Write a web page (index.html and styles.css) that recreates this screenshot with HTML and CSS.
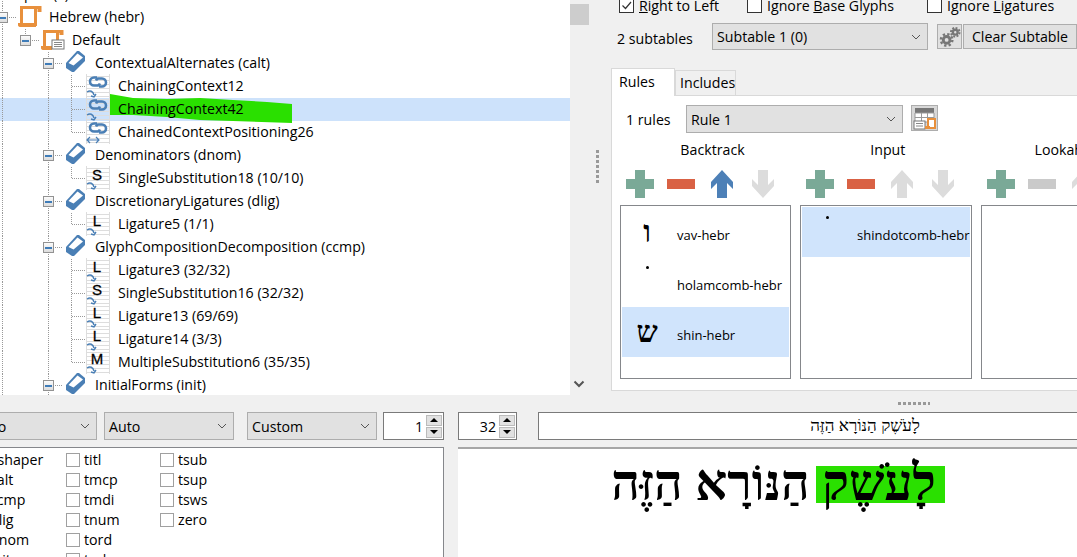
FILE: index.html
```html
<!DOCTYPE html>
<html lang="en">
<head>
  <meta charset="UTF-8">
  <title>Font feature editor</title>
  <link rel="stylesheet" href="styles.css">
</head>
<body>
  <svg class="defs" width="0" height="0">
    <symbol id="feature" viewBox="0 0 20 24">
      <path d="M0 13 11 1h2l6 5v5L8 22H6l-6-4z" fill="#4a7fb5"/>
      <path d="M2.500 13 11.500 3.500 17 7.500 7.500 15.500z" fill="#fff"/>
    </symbol>
    <symbol id="chev" viewBox="0 0 12 8">
      <path d="M2 2l4 4 4-4" fill="none" stroke="#555" stroke-width="1"/>
    </symbol>
    <symbol id="table" viewBox="0 0 24 24">
      <g stroke="#ddd" fill="none">
        <path d="M0 2.500h24M0 6.500h24M0 10.500h24M0 14.500h24M0 18.500h24M0 22.500h24M.5 0v24M23.500 0v24"/>
      </g>
    </symbol>
    <symbol id="link" viewBox="0 0 24 16">
      <g fill="none" stroke="#4a7fb5" stroke-width="2.600">
        <path d="M11 3.500H8a4 4 0 0 0 0 8h4a4 4 0 0 0 2-2"/>
        <path d="M13 12.500h3a4 4 0 0 0 0-8h-4a4 4 0 0 0-2 2"/>
      </g>
    </symbol>
    <symbol id="sub" viewBox="0 0 12 8">
      <path d="M1 2c3-2 6-1 7 3M5 6l3 1 2-3" fill="none" stroke="#4a7fb5" stroke-width="1.400"/>
    </symbol>
    <symbol id="both" viewBox="0 0 14 8">
      <path d="M1 4h12M4 1 1 4l3 3M10 1l3 3-3 3" fill="none" stroke="#4a7fb5" stroke-width="1.200"/>
    </symbol>
    <symbol id="plus" viewBox="0 0 28 28"><path d="M9 0h10v9h9v10h-9v9H9v-9H0V9h9z"/></symbol>
    <symbol id="minus" viewBox="0 0 28 28"><path d="M0 9h28v10H0z"/></symbol>
    <symbol id="up" viewBox="0 0 22 28"><path d="M11 0l11 12v7l-6-6v15h-10V13l-6 6v-7z"/></symbol>
    <symbol id="down" viewBox="0 0 22 28"><path d="M11 28 0 16V9l6 6V0h10v15l6-6v7z"/></symbol>
  </svg>

  <div class="top">
    <div class="tree-pane">
      <div class="row"><i class="cell v"></i><span class="ghost">pen (x)</span></div>

      <div class="row">
        <i class="cell v h"><b class="exp"></b></i>
        <span class="ico">
          <svg class="script" width="26" height="23" viewBox="0 0 26 23"><path d="M6.500 18V1.500h16M22.500 1.500H25v3h-2.500M20.500 3v17" fill="none" stroke="#e8903c" stroke-width="3"/><path d="M3 17h18v4H6q-3 0-3-2z" fill="#e8903c"/></svg>
        </span>
        <span class="label">Hebrew (hebr)</span>
      </div>
      <div class="row">
        <i class="cell v"></i><i class="cell up h"><b class="exp gray"></b></i>
        <span class="ico">
          <svg class="script" width="26" height="25" viewBox="0 0 26 25"><path d="M6.500 18V2.500h15M21.500 2.500H24v2h-2.500M19.500 4v8" fill="none" stroke="#e8903c" stroke-width="3"/><path d="M3 17h11v4H6q-3 0-3-2z" fill="#e8903c"/><rect x="14" y="11" width="12" height="9" fill="#fff" stroke="#777"/><path d="M16 13.500h8M16 15.500h8M16 17.500h8" stroke="#888"/></svg>
        </span>
        <span class="label">Default</span>
      </div>

      <div class="row">
        <i class="cell v"></i><i class="cell"></i><i class="cell v h"><b class="exp"></b></i>
        <span class="ico"><svg class="fea" width="20" height="24"><use href="#feature"/></svg></span>
        <span class="label">ContextualAlternates (calt)</span>
      </div>
      <div class="row">
        <i class="cell v"></i><i class="cell"></i><i class="cell v"></i><i class="cell v h"></i>
        <span class="ico lk"><svg width="24" height="24"><use href="#table"/><use href="#link" width="24" height="16" y="0"/><use href="#sub" width="12" height="8" y="16"/></svg></span>
        <span class="label">ChainingContext12</span>
      </div>
      <div class="row sel">
        <i class="cell v"></i><i class="cell"></i><i class="cell v"></i><i class="cell v h"></i>
        <span class="ico lk"><svg width="24" height="24"><use href="#table"/><use href="#link" width="24" height="16" y="0"/><use href="#sub" width="12" height="8" y="16"/></svg></span>
        <span class="label marked">
          <svg class="paint" width="184" height="30" viewBox="0 0 184 30"><path d="M0 0 23 4 57 5 90 4 123 6 157 8 182 10V29L123 27 90 26 57 23 23 21 0 21z" fill="#2ae000"/></svg>
          <span>ChainingContext42</span>
        </span>
      </div>
      <div class="row">
        <i class="cell v"></i><i class="cell"></i><i class="cell v"></i><i class="cell up h"></i>
        <span class="ico lk"><svg width="24" height="24"><use href="#table"/><use href="#link" width="24" height="16" y="0"/><use href="#both" width="14" height="8" y="16"/></svg></span>
        <span class="label">ChainedContextPositioning26</span>
      </div>

      <div class="row">
        <i class="cell v"></i><i class="cell"></i><i class="cell v h"><b class="exp"></b></i>
        <span class="ico"><svg class="fea" width="20" height="24"><use href="#feature"/></svg></span>
        <span class="label">Denominators (dnom)</span>
      </div>
      <div class="row">
        <i class="cell v"></i><i class="cell"></i><i class="cell v"></i><i class="cell up h"></i>
        <span class="ico lk"><svg width="24" height="24"><use href="#table"/><text x="11" y="14" class="letter">S</text><use href="#sub" width="12" height="8" y="16"/></svg></span>
        <span class="label">SingleSubstitution18 (10/10)</span>
      </div>

      <div class="row">
        <i class="cell v"></i><i class="cell"></i><i class="cell v h"><b class="exp"></b></i>
        <span class="ico"><svg class="fea" width="20" height="24"><use href="#feature"/></svg></span>
        <span class="label">DiscretionaryLigatures (dlig)</span>
      </div>
      <div class="row">
        <i class="cell v"></i><i class="cell"></i><i class="cell v"></i><i class="cell up h"></i>
        <span class="ico lk"><svg width="24" height="24"><use href="#table"/><text x="11" y="14" class="letter">L</text><use href="#sub" width="12" height="8" y="16"/></svg></span>
        <span class="label">Ligature5 (1/1)</span>
      </div>

      <div class="row">
        <i class="cell v"></i><i class="cell"></i><i class="cell v h"><b class="exp"></b></i>
        <span class="ico"><svg class="fea" width="20" height="24"><use href="#feature"/></svg></span>
        <span class="label">GlyphCompositionDecomposition (ccmp)</span>
      </div>
      <div class="row">
        <i class="cell v"></i><i class="cell"></i><i class="cell v"></i><i class="cell v h"></i>
        <span class="ico lk"><svg width="24" height="24"><use href="#table"/><text x="11" y="14" class="letter">L</text><use href="#sub" width="12" height="8" y="16"/></svg></span>
        <span class="label">Ligature3 (32/32)</span>
      </div>
      <div class="row">
        <i class="cell v"></i><i class="cell"></i><i class="cell v"></i><i class="cell v h"></i>
        <span class="ico lk"><svg width="24" height="24"><use href="#table"/><text x="11" y="14" class="letter">S</text><use href="#sub" width="12" height="8" y="16"/></svg></span>
        <span class="label">SingleSubstitution16 (32/32)</span>
      </div>
      <div class="row">
        <i class="cell v"></i><i class="cell"></i><i class="cell v"></i><i class="cell v h"></i>
        <span class="ico lk"><svg width="24" height="24"><use href="#table"/><text x="11" y="14" class="letter">L</text><use href="#sub" width="12" height="8" y="16"/></svg></span>
        <span class="label">Ligature13 (69/69)</span>
      </div>
      <div class="row">
        <i class="cell v"></i><i class="cell"></i><i class="cell v"></i><i class="cell v h"></i>
        <span class="ico lk"><svg width="24" height="24"><use href="#table"/><text x="11" y="14" class="letter">L</text><use href="#sub" width="12" height="8" y="16"/></svg></span>
        <span class="label">Ligature14 (3/3)</span>
      </div>
      <div class="row">
        <i class="cell v"></i><i class="cell"></i><i class="cell v"></i><i class="cell up h"></i>
        <span class="ico lk"><svg width="24" height="24"><use href="#table"/><text x="11" y="14" class="letter">M</text><use href="#sub" width="12" height="8" y="16"/></svg></span>
        <span class="label">MultipleSubstitution6 (35/35)</span>
      </div>

      <div class="row">
        <i class="cell v"></i><i class="cell"></i><i class="cell v h"><b class="exp"></b></i>
        <span class="ico"><svg class="fea" width="20" height="24"><use href="#feature"/></svg></span>
        <span class="label">InitialForms (init)</span>
      </div>
    </div>

    <div class="scrollbar">
      <div class="thumb"></div>
      <svg class="scroll-down" width="12" height="8" viewBox="0 0 12 8"><path d="M1.500 1.500 6 6l4.500-4.500" fill="none" stroke="#555" stroke-width="2"/></svg>
    </div>
    <div class="splitter"><div class="grip"></div></div>

    <div class="lookup">
      <div class="flags">
        <span class="flag flag-rtl"><i class="box on"><svg width="13" height="13" viewBox="0 0 13 13"><path d="M2.500 6.500 5.500 9.500 11 3" fill="none" stroke="#333" stroke-width="1.200"/></svg></i><u>R</u>ight to Left</span>
        <span class="flag flag-base"><i class="box on"></i>Ignore <u>B</u>ase Glyphs</span>
        <span class="flag"><i class="box on"></i>Ignore <u>L</u>igatures</span>
      </div>
      <div class="subtables">
        <span class="count">2 subtables</span>
        <div class="combo combo-sub">Subtable 1 (0)<svg width="12" height="8"><use href="#chev"/></svg></div>
        <div class="btn gear">
          <svg width="24" height="24" viewBox="0 0 24 24"><g fill="none" stroke="#777"><circle cx="9" cy="15" r="3.500" stroke-width="3"/><circle cx="9" cy="15" r="6" stroke-width="2.500" stroke-dasharray="2.400 2.300"/><circle cx="18" cy="7" r="2.500" stroke-width="2.500"/><circle cx="18" cy="7" r="4.500" stroke-width="2" stroke-dasharray="2 1.500"/></g></svg>
        </div>
        <div class="btn clear">Clear Subtable</div>
      </div>

      <div class="tabs">
        <div class="tab active">Rules</div>
        <div class="tab">Includes</div>
      </div>
      <div class="pane">
        <div class="rule-row">
          <span class="rule-count">1 rules</span>
          <div class="combo combo-rule">Rule 1<svg width="12" height="8"><use href="#chev"/></svg></div>
          <div class="btn table-btn">
            <svg width="25" height="25" viewBox="0 0 25 25"><path d="M3 2h19v5H3z" fill="#777"/><path d="M3 7h19v9H3zM3 11.500h19M9.500 7v9M15.500 7v9" fill="#fff" stroke="#999"/><rect x="2" y="15" width="11" height="8" fill="#fff" stroke="#777"/><path d="M4 17.500h7M4 20h7" stroke="#888"/><path d="M16 13h7v9h-8v-1h1z" fill="#fff" stroke="#e8903c" stroke-width="2"/><path d="M13 20h5v3h-5z" fill="#e8903c"/></svg>
          </div>
        </div>
        <div class="sets">
          <div class="set">
            <div class="set-title title-back">Backtrack</div>
            <div class="tools">
              <svg class="green" width="28" height="28"><use href="#plus"/></svg>
              <svg class="red" width="28" height="28"><use href="#minus"/></svg>
              <svg class="blue" width="22" height="28"><use href="#up"/></svg>
              <svg class="off" width="22" height="28"><use href="#down"/></svg>
            </div>
            <div class="list">
              <div class="item"><span class="glyph" lang="he">ו</span><span class="name">vav-hebr</span></div>
              <div class="item"><span class="glyph dot"></span><span class="name">holamcomb-hebr</span></div>
              <div class="item sel"><span class="glyph" lang="he">ש</span><span class="name">shin-hebr</span></div>
            </div>
          </div>
          <div class="set">
            <div class="set-title title-input">Input</div>
            <div class="tools">
              <svg class="green" width="28" height="28"><use href="#plus"/></svg>
              <svg class="red" width="28" height="28"><use href="#minus"/></svg>
              <svg class="off" width="22" height="28"><use href="#up"/></svg>
              <svg class="off" width="22" height="28"><use href="#down"/></svg>
            </div>
            <div class="list">
              <div class="item sel"><span class="glyph dot"></span><span class="name">shindotcomb-hebr</span></div>
            </div>
          </div>
          <div class="set">
            <div class="set-title title-ahead">Lookahead</div>
            <div class="tools">
              <svg class="green" width="28" height="28"><use href="#plus"/></svg>
              <svg class="gray" width="28" height="28"><use href="#minus"/></svg>
              <svg class="off" width="22" height="28"><use href="#up"/></svg>
              <svg class="off" width="22" height="28"><use href="#down"/></svg>
            </div>
            <div class="list"></div>
          </div>
        </div>
      </div>
    </div>
  </div>

  <div class="hsplit"><div class="hgrip"></div></div>

  <div class="bottom">
    <div class="bottom-left">
      <div class="controls">
        <div class="combo combo-a">Auto<svg width="12" height="8"><use href="#chev"/></svg></div>
        <div class="combo combo-b">Auto<svg width="12" height="8"><use href="#chev"/></svg></div>
        <div class="combo combo-c">Custom<svg width="12" height="8"><use href="#chev"/></svg></div>
        <div class="spin spin-a">1<span class="arrows"><b class="arr-up"></b><b class="arr-down"></b></span></div>
      </div>
      <div class="features">
        <div class="feature-grid">
          <span class="feat"><i class="box"></i>xshaper</span>
          <span class="feat"><i class="box"></i>calt</span>
          <span class="feat"><i class="box"></i>ccmp</span>
          <span class="feat"><i class="box"></i>dlig</span>
          <span class="feat"><i class="box"></i>dnom</span>
          <span class="feat"><i class="box"></i>init</span>
          <span class="feat"><i class="box"></i>titl</span>
          <span class="feat"><i class="box"></i>tmcp</span>
          <span class="feat"><i class="box"></i>tmdi</span>
          <span class="feat"><i class="box"></i>tnum</span>
          <span class="feat"><i class="box"></i>tord</span>
          <span class="feat"><i class="box"></i>trak</span>
          <span class="feat"><i class="box"></i>tsub</span>
          <span class="feat"><i class="box"></i>tsup</span>
          <span class="feat"><i class="box"></i>tsws</span>
          <span class="feat"><i class="box"></i>zero</span>
        </div>
      </div>
    </div>
    <div class="bottom-right">
      <div class="controls">
        <div class="spin spin-b">32<span class="arrows"><b class="arr-up"></b><b class="arr-down"></b></span></div>
        <div class="sample-input" dir="rtl" lang="he">לָעֹשֶׁק הַנּוֹרָא הַזֶּה</div>
      </div>
      <div class="preview" dir="rtl" lang="he"><span class="hit">לָעֹשֶׁק</span> הַנּוֹרָא הַזֶּה</div>
    </div>
  </div>
</body>
</html>
```

FILE: styles.css
```css
* {
  box-sizing: border-box;
}

body {
  margin: 0;
  width: 1077px;
  height: 557px;
  overflow: hidden;
  background: #f0f0f0;
  color: #000;
  font-family: "Open Sans", "Noto Sans", sans-serif;
  font-size: 14.2px;
}

.defs {
  display: block;
  height: 0;
}

/* top half */
.top {
  display: flex;
  height: 397px;
}

.tree-pane {
  width: 570px;
  height: 395px;
  flex-shrink: 0;
  background: #fff;
  overflow: hidden;
}

.row {
  display: flex;
  height: 23px;
  line-height: 22px;
  margin-left: -9px;
  white-space: nowrap;
}

.row:first-child {
  margin-top: -17px;
}

.row.sel {
  background: #cde2fb;
}

.ghost {
  margin-left: 10px;
}

.cell {
  position: relative;
  display: flex;
  align-items: center;
  justify-content: center;
  flex: 0 0 23px;
  height: 23px;
}

/* dotted tree guides */
.cell.v::before,
.cell.up::before {
  content: "";
  position: absolute;
  left: 11px;
  top: 0;
  width: 1px;
  height: 100%;
  background: repeating-linear-gradient(#999 0 1px, transparent 1px 2px);
}

.cell.up::before {
  height: 12px;
}

.cell.h::after {
  content: "";
  position: absolute;
  left: 12px;
  top: 11px;
  width: 14px;
  height: 1px;
  background: repeating-linear-gradient(90deg, #999 0 1px, transparent 1px 2px);
}

.exp {
  position: relative;
  z-index: 1;
  width: 11px;
  height: 11px;
  border: 1px solid #929292;
  background: linear-gradient(#fbfbfb, #dcdcdc);
  display: flex;
  align-items: center;
  justify-content: center;
}

.exp::before {
  content: "";
  width: 7px;
  height: 2px;
  background: #3f7cb8;
}

.ico {
  position: relative;
  z-index: 1;
  flex: 0 0 35px;
  height: 23px;
  padding-left: 3px;
}

.ico svg {
  display: block;
  overflow: visible;
}

.ico .script {
  margin-left: -2px;
}

.ico .fea {
  margin: -2px 0 0 3px;
}

.lk svg {
  margin-top: -1px;
}

.letter {
  font-family: "Liberation Sans", sans-serif;
  font-size: 15px;
  stroke: #000;
  stroke-width: 0.3px;
  text-anchor: middle;
}

.label {
  position: relative;
}

.marked span {
  position: relative;
}

.paint {
  position: absolute;
  left: -8px;
  top: -4px;
}

/* scrollbar and splitter */
.scrollbar {
  position: relative;
  width: 19px;
  flex-shrink: 0;
}

.thumb {
  width: 19px;
  height: 21px;
  margin-top: 4px;
  background: #cdcdcd;
}

.scroll-down {
  position: absolute;
  left: 3px;
  top: 380px;
}

.splitter {
  width: 22px;
  flex-shrink: 0;
  padding: 150px 0 0 7px;
}

.grip {
  width: 3px;
  height: 33px;
  background: repeating-linear-gradient(#999 0 3px, transparent 3px 5px);
}

/* lookup editor */
.lookup {
  flex-shrink: 0;
  width: 600px;
  display: flex;
  flex-direction: column;
}

.flags {
  display: flex;
  height: 23px;
  margin-top: -6px;
  padding: 0 0 0 8px;
  line-height: 23px;
}

.flag {
  display: flex;
  align-items: center;
  white-space: pre;
}

.flag-rtl {
  width: 128px;
}

.flag-base {
  width: 180px;
}

.box {
  display: block;
  flex-shrink: 0;
  width: 15px;
  height: 15px;
  margin-right: 5px;
  background: #fff;
  border: 1px solid #333;
}

.box svg {
  display: block;
}

.subtables {
  display: flex;
  align-items: flex-start;
  margin-top: 6px;
  height: 44px;
  padding-left: 6px;
}

.count {
  width: 95px;
  line-height: 32px;
}

.combo {
  display: flex;
  align-items: center;
  justify-content: space-between;
  height: 28px;
  padding: 0 5px 0 4px;
  background: #e1e1e1;
  border: 1px solid #adadad;
  white-space: nowrap;
  flex-shrink: 0;
}

.combo-sub {
  width: 216px;
  height: 27px;
}

.btn {
  display: flex;
  align-items: center;
  justify-content: center;
  height: 25px;
  background: #e1e1e1;
  border: 1px solid #adadad;
  flex-shrink: 0;
}

.gear {
  width: 25px;
  margin: 1px 1px 0 9px;
}

.clear {
  width: 114px;
  margin-top: 1px;
}

.tabs {
  display: flex;
  align-items: flex-end;
  height: 28px;
}

.tab {
  height: 25px;
  line-height: 24px;
  padding: 0 4px;
  width: 61px;
  border: 1px solid #d9d9d9;
  border-bottom: 0;
  white-space: nowrap;
}

.tab.active {
  width: 64px;
  height: 28px;
  line-height: 26px;
  padding-left: 7px;
  background: #fff;
  position: relative;
  z-index: 1;
  margin-bottom: -1px;
}

.pane {
  height: 296px;
  background: #fff;
  border: 1px solid #d9d9d9;
  padding: 9px 0 0 8px;
}

.rule-row {
  display: flex;
  height: 28px;
  padding-left: 6px;
}

.rule-count {
  width: 60px;
  line-height: 30px;
}

.combo-rule {
  width: 217px;
}

.table-btn {
  width: 27px;
  height: 26px;
  margin-left: 8px;
  background: #d8d8d8;
}

.sets {
  display: flex;
  gap: 9px;
  margin-top: 7px;
}

.set {
  flex: 0 0 171px;
}

.set-title {
  height: 20px;
  line-height: 20px;
  text-align: center;
}

.title-back {
  padding-left: 14px;
}

.title-input {
  padding-left: 4px;
}

.title-ahead {
  padding-left: 10px;
  white-space: nowrap;
}

.tools {
  display: flex;
  height: 28px;
  margin: 10px 0 7px;
  padding-left: 6px;
}

.tools svg {
  flex-shrink: 0;
}

.tools svg:nth-child(2) {
  margin-left: 13px;
}

.tools svg:nth-child(3) {
  margin-left: 16px;
}

.tools svg:nth-child(4) {
  margin-left: 19px;
}

.green {
  fill: #7aa997;
}

.red {
  fill: #d96144;
}

.blue {
  fill: #4d80b7;
}

.off {
  fill: #dcdcdc;
}

.tools .gray {
  fill: #cacaca;
}

.list {
  height: 174px;
  border: 1px solid #85878b;
  padding: 1px;
  overflow: hidden;
  background: #fff;
}

.item {
  display: flex;
  height: 50px;
  font-size: 13px;
  white-space: nowrap;
}

.item.sel {
  background: #d0e4fc;
}

.glyph {
  flex: 0 0 50px;
  margin-right: 5px;
  padding-top: 6px;
  text-align: center;
  font-family: "Liberation Serif", serif;
  font-weight: bold;
  font-size: 30px;
  line-height: 38px;
}

.glyph.dot::before {
  content: "";
  display: block;
  width: 3px;
  height: 3px;
  margin: 3px 0 0 24px;
  border-radius: 50%;
  background: #000;
}

.name {
  line-height: 50px;
  margin-top: 3px;
}

/* bottom half */
.hsplit {
  height: 15px;
  padding: 5px 0 0 898px;
}

.hgrip {
  width: 32px;
  height: 3px;
  background: repeating-linear-gradient(90deg, #999 0 3px, transparent 3px 5px);
}

.bottom {
  display: flex;
  height: 145px;
}

.bottom-left {
  flex: 0 0 458px;
  overflow: hidden;
}

.bottom-right {
  flex: 0 0 auto;
  width: 619px;
}

.controls {
  display: flex;
  height: 28px;
  margin-bottom: 7px;
}

.combo-a {
  width: 127px;
  margin-left: -30px;
}

.combo-b {
  width: 130px;
  margin-left: 7px;
}

.combo-c {
  width: 130px;
  margin-left: 13px;
}

.spin {
  display: flex;
  align-items: center;
  justify-content: flex-end;
  height: 28px;
  background: #fff;
  border: 1px solid #7a7a7a;
  padding-right: 1px;
  flex-shrink: 0;
}

.spin-a {
  width: 61px;
  margin-left: 6px;
}

.spin-b {
  width: 59px;
}

.arrows {
  display: flex;
  flex-direction: column;
  gap: 1px;
  width: 16px;
  margin-left: 3px;
}

.arrows b {
  display: flex;
  align-items: center;
  justify-content: center;
  height: 11px;
  background: #e1e1e1;
  border: 1px solid #bbb;
}

.arr-up::before,
.arr-down::before {
  content: "";
  border-left: 4px solid transparent;
  border-right: 4px solid transparent;
}

.arr-up::before {
  border-bottom: 4px solid #000;
}

.arr-down::before {
  border-top: 4px solid #000;
}

.sample-input {
  width: 654px;
  height: 28px;
  margin-left: 21px;
  flex-shrink: 0;
  background: #fff;
  border: 1px solid #7a7a7a;
  text-align: center;
  line-height: 26px;
  font-family: "Liberation Serif", serif;
  font-size: 17px;
}

.features {
  width: 444px;
  height: 115px;
  background: #fff;
  border: 1px solid #85878b;
  border-left: 0;
  overflow: hidden;
}

.feature-grid {
  display: grid;
  grid-auto-flow: column;
  grid-template-rows: repeat(6, 20px);
  grid-template-columns: repeat(3, 94px);
  margin: 1px 0 0 -28px;
}

.feat {
  display: flex;
  align-items: center;
  white-space: nowrap;
}

.feat .box {
  width: 14px;
  height: 14px;
  margin: 0 4px -2px 0;
  border-color: #a0a0a0;
}

.preview {
  height: 110px;
  background: #fff;
  border-top: 2px solid #a6a6a6;
  padding-right: 132px;
  font-family: "Liberation Serif", serif;
  font-weight: bold;
  font-size: 50px;
  line-height: 68px;
  white-space: nowrap;
}

.hit {
  padding: 0 9px 0 6px;
  margin-left: -6px;
  background: linear-gradient(#2ae000, #2ae000) no-repeat 0 11px;
  background-size: 100% 37px;
}
```
